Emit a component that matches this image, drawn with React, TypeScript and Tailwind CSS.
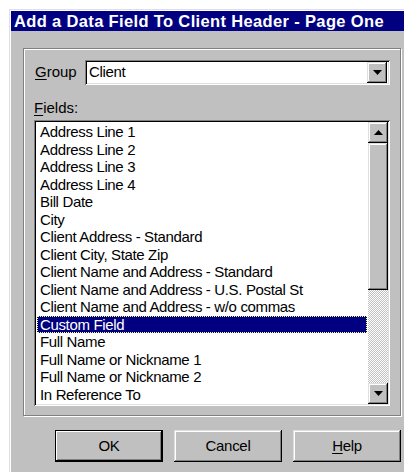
import React from 'react';

const fields = [
  'Address Line 1',
  'Address Line 2',
  'Address Line 3',
  'Address Line 4',
  'Bill Date',
  'City',
  'Client Address - Standard',
  'Client City, State Zip',
  'Client Name and Address - Standard',
  'Client Name and Address - U.S. Postal St',
  'Client Name and Address - w/o commas',
  'Custom Field',
  'Full Name',
  'Full Name or Nickname 1',
  'Full Name or Nickname 2',
  'In Reference To',
];

const selected = 'Custom Field';

// classic raised 3D bevel used on buttons and scroll arrows
const raised =
  'bg-[#c0c0c0] shadow-[inset_-1px_-1px_0_#000,inset_1px_1px_0_#dfdfdf,inset_-2px_-2px_0_#808080,inset_2px_2px_0_#fff]';

// sunken field bevel
const sunken =
  'bg-white shadow-[inset_1px_1px_0_#808080,inset_-1px_-1px_0_#fff,inset_2px_2px_0_#000,inset_-2px_-2px_0_#dfdfdf]';

const ArrowDown = () => (
  <svg width="9" height="5" viewBox="0 0 9 5">
    <path d="M0 0h9L4.5 5z" fill="#000" />
  </svg>
);

const ArrowUp = () => (
  <svg width="9" height="5" viewBox="0 0 9 5">
    <path d="M0 5h9L4.5 0z" fill="#000" />
  </svg>
);

const DialogButton: React.FC<{ label: React.ReactNode; isDefault?: boolean }> = ({ label, isDefault }) => (
  <div
    className={`w-[108px] h-[32px] flex items-center justify-center text-[15px] tracking-[-0.3px] text-black ${
      isDefault
        ? 'bg-[#c0c0c0] shadow-[inset_-2px_-2px_0_#000,inset_1px_1px_0_#000,inset_2px_2px_0_#fff,inset_-3px_-3px_0_#808080]'
        : raised
    }`}
  >
    {label}
  </div>
);

export default function App() {
  return (
    <div
      className="w-[404px] h-[472px] bg-white overflow-hidden pt-[9px] pl-[9px]"
      style={{ fontFamily: '"Liberation Sans", Arial, sans-serif' }}
    >
      <div className="w-[420px] h-[470px] bg-[#c0c0c0] shadow-[inset_1px_1px_0_#dfdfdf,inset_2px_2px_0_#fff] pt-[2px] pl-[2px]">
        {/* title bar */}
        <div className="h-[20px] bg-[#000080] flex items-center pl-[3px]">
          <span className="text-white font-bold text-[16.5px] leading-none tracking-[0.35px]">
            Add a Data Field To Client Header - Page One
          </span>
        </div>

        {/* group frame */}
        <div className="ml-[12px] mt-[17px] w-[378px] h-[368px] border border-[#808080] shadow-[inset_1px_1px_0_#fff,1px_1px_0_#fff] px-[10px] pt-[11px]">
          <div className="flex items-center h-[25px]">
            <span className="w-[51px] text-[15px] text-black pl-[1px]">
              <span className="underline underline-offset-2">G</span>roup
            </span>
            <div className={`${sunken} w-[305px] h-[25px] flex items-center pl-[4px] pr-[3px]`}>
              <span className="flex-1 text-[15px] tracking-[-0.35px] text-black">Client</span>
              <div className={`${raised} w-[20px] h-[21px] flex items-center justify-center`}>
                <ArrowDown />
              </div>
            </div>
          </div>

          <div className="mt-[13px] h-[22px] text-[15px] text-black leading-[20px]">
            <span className="underline underline-offset-2">F</span>ields:
          </div>

          {/* fields list */}
          <div className={`${sunken} w-[356px] h-[285.6px] p-[2px] flex`}>
            <div className="flex-1 pl-[1px] pr-[1px] pt-[1px]">
              {fields.map((f) => (
                <div
                  key={f}
                  className={`h-[17.5px] text-[15px] tracking-[-0.35px] leading-[18px] whitespace-nowrap pl-[3px] ${
                    f === selected
                      ? 'bg-[#000080] text-white outline-1 outline-dotted outline-[#ffff80] -outline-offset-1'
                      : 'text-black'
                  }`}
                >
                  {f}
                </div>
              ))}
            </div>
            <div className="w-[20px] flex flex-col">
              <div className={`${raised} h-[21px] flex items-center justify-center`}>
                <ArrowUp />
              </div>
              <div className={`${raised} h-[147px]`} />
              <div className="flex-1 bg-[repeating-conic-gradient(#c0c0c0_0_25%,#fff_0_50%)] bg-[length:2px_2px]" />
              <div className={`${raised} h-[21px] flex items-center justify-center`}>
                <ArrowDown />
              </div>
            </div>
          </div>
        </div>

        {/* buttons */}
        <div className="flex gap-[11px] ml-[44px] mt-[14px]">
          <DialogButton label="OK" isDefault />
          <DialogButton label="Cancel" />
          <DialogButton
            label={
              <span>
                <span className="underline underline-offset-2">H</span>elp
              </span>
            }
          />
        </div>
      </div>
    </div>
  );
}
